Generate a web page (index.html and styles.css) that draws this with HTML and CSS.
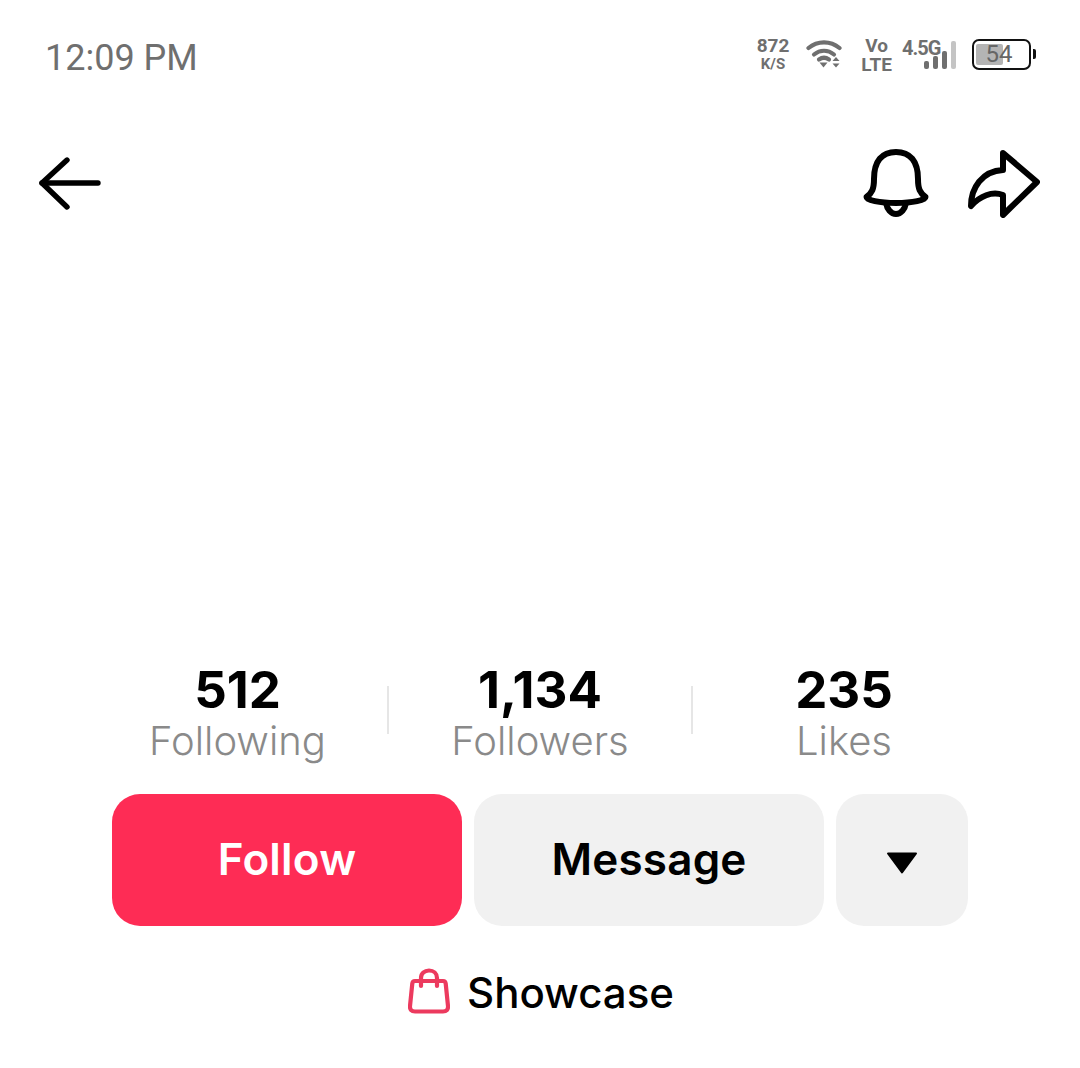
FILE: index.html
```html
<!DOCTYPE html>
<html lang="en">
<head>
    <meta charset="UTF-8">
    <meta name="viewport" content="width=device-width, initial-scale=1.0">
    <title>Profile</title>
    <link rel="stylesheet" href="styles.css">
</head>
<body>
    <div class="status-bar">
        <span class="clock">12:09 PM</span>
        <div class="status-icons">
            <div class="speed"><span>872</span><span class="speed-unit">K/S</span></div>
            <svg class="wifi" width="38" height="30" viewBox="0 0 38 30" fill="none" stroke="#6f6f6f" stroke-width="4.2" stroke-linecap="round">
                <path d="M2.5 9C11.5 1.5 24.5 1.5 33.5 9"/>
                <path d="M8 15.5C14 10.5 22 10.5 28 15.5"/>
                <path d="M13 20.5C16 18.4 20 18.4 23 20.5"/>
                <path d="M13.5 23.5h8l-4 5z" fill="#6f6f6f" stroke="none"/>
                <path d="M26.5 22l3.5-4 3.5 4zM26.5 24.5h7l-3.5 4z" fill="#6f6f6f" stroke="none"/>
            </svg>
            <div class="volte"><span>Vo</span><span>LTE</span></div>
            <div class="network">
                <span class="network-label">4.5G</span>
                <div class="signal">
                    <i class="bar bar-1"></i>
                    <i class="bar bar-2"></i>
                    <i class="bar bar-3"></i>
                    <i class="bar bar-4"></i>
                </div>
            </div>
            <div class="battery">
                <div class="battery-body">
                    <div class="battery-fill"></div>
                    <span class="battery-level">54</span>
                </div>
                <div class="battery-tip"></div>
            </div>
        </div>
    </div>

    <div class="nav-bar">
        <svg class="back-icon" width="62" height="54" viewBox="0 0 62 54" fill="none" stroke="#000" stroke-width="5.4" stroke-linecap="round" stroke-linejoin="round">
            <path d="M28 3L3 26L28 50"/>
            <path d="M3 26H59"/>
        </svg>
        <div class="nav-actions">
            <svg width="66" height="70" viewBox="0 0 66 70" fill="none" stroke="#000" stroke-width="6" stroke-linecap="round" stroke-linejoin="round">
                <path d="M3.5 48C9 44 11 40 11 30C11 12 19 3 33 3C47 3 55 12 55 30C55 40 57 44 62.500 48C62.500 51 50 54 33 54C16 54 3.500 51 3.500 48Z"/>
                <path d="M23 54C24 60 28 65 33 65C38 65 42 60 43 54"/>
            </svg>
            <svg width="72" height="68" viewBox="0 0 72 68" fill="none" stroke="#000" stroke-width="6" stroke-linecap="round" stroke-linejoin="round">
                <path d="M35 3L69 32L35 65V45C24 41 12 46 3 56C3 38 14 21 35 20Z"/>
            </svg>
        </div>
    </div>

    <div class="stats">
        <div class="stat">
            <div class="stat-value">512</div>
            <div class="stat-label">Following</div>
        </div>
        <div class="stat-divider"></div>
        <div class="stat">
            <div class="stat-value">1,134</div>
            <div class="stat-label">Followers</div>
        </div>
        <div class="stat-divider"></div>
        <div class="stat">
            <div class="stat-value">235</div>
            <div class="stat-label">Likes</div>
        </div>
    </div>

    <div class="actions">
        <button class="btn btn-follow">Follow</button>
        <button class="btn btn-message">Message</button>
        <button class="btn btn-more">
            <svg width="32" height="22" viewBox="0 0 32 22"><path d="M2 1.500H30L16 20.500Z" fill="#000" stroke="#000" stroke-width="2" stroke-linejoin="round"/></svg>
        </button>
    </div>

    <div class="showcase">
        <svg class="showcase-icon" width="42" height="46" viewBox="0 0 42 46" fill="none" stroke="#ec3a5e" stroke-width="4.2" stroke-linecap="round" stroke-linejoin="round">
            <path d="M7 13H35C36.5 13 37.5 14 37.7 15.500L40 38C40.300 41.500 38.500 43.500 35 43.500H7C3.500 43.500 1.700 41.500 2 38L4.300 15.500C4.500 14 5.500 13 7 13Z"/>
            <path d="M13 18V10C13 5.500 16.500 2.500 21 2.500C25.500 2.500 29 5.500 29 10V18"/>
        </svg>
        <span>Showcase</span>
    </div>
</body>
</html>
```

FILE: styles.css
```css
html, body {
    height: 100%;
    overflow: hidden;
}
body {
    margin: 0;
    background-color: #ffffff;
    color: #000000;
    font-family: 'Inter', sans-serif;
}
.status-bar {
    height: 112px;
    box-sizing: border-box;
    padding: 0 44px 0 45px;
    display: flex;
    justify-content: space-between;
    align-items: center;
    color: #6f6f6f;
    font-family: 'Roboto', sans-serif;
}
.clock {
    font-size: 36px;
    margin-top: 3px;
}
.status-icons {
    display: flex;
    align-items: center;
    margin-bottom: 4px;
}
.speed, .volte {
    display: flex;
    flex-direction: column;
    align-items: center;
    font-weight: 700;
}
.speed {
    font-size: 19px;
    line-height: 20px;
}
.speed-unit {
    font-size: 15px;
    line-height: 16px;
}
.wifi {
    margin-left: 17px;
}
.volte {
    margin: 2px 0 0 17px;
    font-size: 19px;
    line-height: 19px;
}
.network {
    margin-left: 10px;
    position: relative;
    width: 55px;
    height: 30px;
}
.network-label {
    position: absolute;
    left: 0;
    top: -3px;
    font-size: 20px;
    font-weight: 700;
    letter-spacing: -1px;
}
.signal {
    position: absolute;
    left: 22px;
    bottom: 0;
    display: flex;
    align-items: flex-end;
    gap: 4px;
}
.bar {
    display: block;
    width: 5px;
    background-color: #6f6f6f;
    border-radius: 2px;
}
.bar-1 { height: 8px; }
.bar-2 { height: 13px; }
.bar-3 { height: 18px; }
.bar-4 { height: 28px; background-color: #c4c4c4; }
.battery {
    margin-left: 15px;
    display: flex;
    align-items: center;
}
.battery-body {
    position: relative;
    width: 55px;
    height: 27px;
    border: 2.5px solid #111111;
    border-radius: 7px;
    box-sizing: content-box;
    display: flex;
    align-items: center;
    justify-content: center;
}
.battery-fill {
    position: absolute;
    left: 2px;
    top: 3px;
    bottom: 3px;
    width: 27px;
    background-color: #b4b4b4;
    border-radius: 2px;
}
.battery-level {
    position: relative;
    margin-right: 5px;
    font-size: 24px;
    color: #666666;
}
.battery-tip {
    width: 3px;
    height: 10px;
    margin-left: 2px;
    background-color: #111111;
    border-radius: 0 2px 2px 0;
}
.nav-bar {
    height: 144px;
    box-sizing: border-box;
    padding: 0 40px 0 39px;
    display: flex;
    justify-content: space-between;
    align-items: center;
}
.nav-actions {
    display: flex;
    align-items: center;
    gap: 39px;
}
.stats {
    margin-top: 406px;
    display: flex;
    justify-content: center;
    align-items: flex-start;
}
.stat {
    width: 304px;
    box-sizing: border-box;
    text-align: center;
}
.stat:first-child {
    padding-left: 3px;
}
.stat-value {
    font-size: 51px;
    font-weight: 700;
    line-height: 56px;
}
.stat-label {
    font-size: 40px;
    font-weight: 300;
    line-height: 46px;
    color: #8a8a8a;
}
.stat-divider {
    width: 2px;
    height: 48px;
    margin: 24px -1px 0;
    background-color: #e6e6e6;
}
.actions {
    margin-top: 30px;
    display: flex;
    justify-content: center;
    gap: 12px;
}
.btn {
    width: 350px;
    height: 132px;
    border: none;
    border-radius: 28px;
    font-family: 'Inter', sans-serif;
    font-size: 44px;
    font-weight: 600;
    letter-spacing: 0.2px;
    color: #000000;
    background-color: #f1f1f1;
    padding: 0 0 2px;
}
.btn-follow {
    background-color: #fe2c55;
    color: #ffffff;
}
.btn-more {
    width: 132px;
    padding: 6px 0 0;
    display: flex;
    align-items: center;
    justify-content: center;
}
.showcase {
    margin-top: 41px;
    padding-left: 2px;
    display: flex;
    justify-content: center;
    align-items: center;
    gap: 17px;
    font-size: 42px;
    font-weight: 500;
}
.showcase-icon {
    margin-bottom: 4px;
}
```
